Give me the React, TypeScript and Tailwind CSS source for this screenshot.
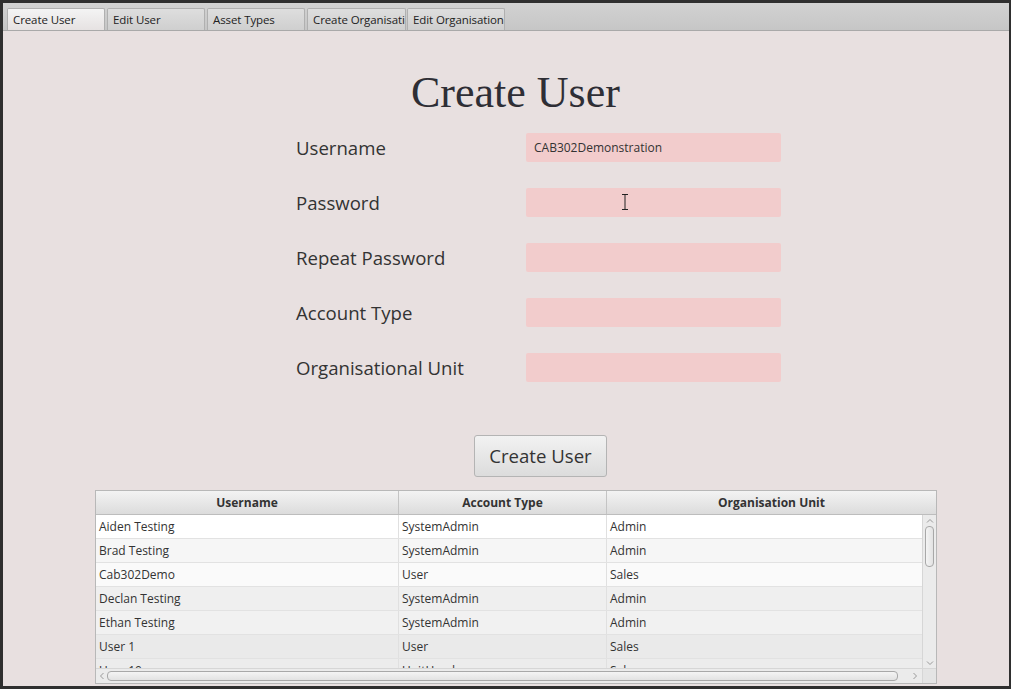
import React from 'react';

const tabs = [
  { label: 'Create User', cls: 'w-[98px]' },
  { label: 'Edit User', cls: 'w-[98px] ml-[2px]' },
  { label: 'Asset Types', cls: 'w-[98px] ml-[2px]' },
  { label: 'Create Organisation', cls: 'w-[99px] ml-[2px]' },
  { label: 'Edit Organisation', cls: 'w-[98px] ml-[1px]' },
];

const fields = ['Username', 'Password', 'Repeat Password', 'Account Type', 'Organisational Unit'];

const users = [
  { name: 'Aiden Testing', type: 'SystemAdmin', unit: 'Admin', bg: 'bg-[#ffffff]' },
  { name: 'Brad Testing', type: 'SystemAdmin', unit: 'Admin', bg: 'bg-[#f6f6f6]' },
  { name: 'Cab302Demo', type: 'User', unit: 'Sales', bg: 'bg-[#fafafa]' },
  { name: 'Declan Testing', type: 'SystemAdmin', unit: 'Admin', bg: 'bg-[#efefef]' },
  { name: 'Ethan Testing', type: 'SystemAdmin', unit: 'Admin', bg: 'bg-[#f1f1f1]' },
  { name: 'User 1', type: 'User', unit: 'Sales', bg: 'bg-[#eaeaea]' },
  { name: 'User 10', type: 'UnitHead', unit: 'Sales', bg: 'bg-[#ececec]' },
];

const TabBar = () => (
  <div className="flex h-[28px] items-end border-b border-[#a9a9a9] bg-gradient-to-b from-[#d2d2d2] to-[#c6c6c6] pl-[4px]">
    {tabs.map((t, i) => (
      <div
        key={t.label}
        className={`flex h-[22px] items-center overflow-hidden whitespace-nowrap rounded-t-[2px] border border-b-0 border-[#b0b0b0] pl-[5px] text-[11.5px] tracking-[-0.1px] text-[#222] ${t.cls} ${
          i === 0 ? 'bg-gradient-to-b from-[#f4f4f4] to-[#e6e2e2]' : 'bg-gradient-to-b from-[#dedede] to-[#cfcfcf]'
        }`}
      >
        {t.label}
      </div>
    ))}
  </div>
);

const UserTable = () => (
  <div className="ml-[92px] mt-[13px] w-[842px] border border-[#b8b8b8] bg-white text-[12px] text-[#333]">
    {/* header */}
    <div className="grid h-[24px] grid-cols-[303px_208px_1fr] border-b border-[#bdbdbd] bg-gradient-to-b from-[#f3f3f3] to-[#dcdcdc] font-bold">
      <div className="flex items-center justify-center border-r border-[#c4c4c4]">Username</div>
      <div className="flex items-center justify-center border-r border-[#c4c4c4]">Account Type</div>
      <div className="flex items-center justify-center">Organisation Unit</div>
    </div>
    {/* body */}
    <div className="flex h-[153px]">
      <div className="flex-1 overflow-hidden">
        {users.map((u) => (
          <div key={u.name} className={`grid h-[24px] shrink-0 grid-cols-[303px_208px_1fr] border-b border-[#e2e2e2] ${u.bg}`}>
            <div className="flex items-center border-r border-[#e0e0e0] pl-[3px]">{u.name}</div>
            <div className="flex items-center border-r border-[#e0e0e0] pl-[3px]">{u.type}</div>
            <div className="flex items-center pl-[3px]">{u.unit}</div>
          </div>
        ))}
      </div>
      {/* vertical scrollbar */}
      <div className="flex w-[14px] flex-col items-center border-l border-[#d6d6d6] bg-[#ebebeb]">
        <svg width="8" height="8" viewBox="0 0 8 8" className="mt-[2px]">
          <path d="M1 5.5 L4 2.5 L7 5.5" fill="none" stroke="#9a9a9a" strokeWidth="1" />
        </svg>
        <div className="mt-[1px] h-[41px] w-[9px] rounded-[4px] border border-[#a8a8a8] bg-gradient-to-r from-[#f4f4f4] to-[#e2e2e2]" />
        <div className="flex-1" />
        <svg width="8" height="8" viewBox="0 0 8 8" className="mb-[1px]">
          <path d="M1 2.5 L4 5.5 L7 2.5" fill="none" stroke="#9a9a9a" strokeWidth="1" />
        </svg>
      </div>
    </div>
    {/* horizontal scrollbar */}
    <div className="flex h-[15px] border-t border-[#d6d6d6] bg-[#ebebeb]">
      <div className="flex flex-1 items-center">
        <svg width="8" height="8" viewBox="0 0 8 8" className="ml-[2px]">
          <path d="M5.5 1 L2.5 4 L5.5 7" fill="none" stroke="#9a9a9a" strokeWidth="1" />
        </svg>
        <div className="ml-[1px] h-[10px] w-[791px] rounded-[4px] border border-[#a8a8a8] bg-gradient-to-b from-[#f4f4f4] to-[#e2e2e2]" />
        <div className="flex-1" />
        <svg width="8" height="8" viewBox="0 0 8 8" className="mr-[3px]">
          <path d="M2.5 1 L5.5 4 L2.5 7" fill="none" stroke="#9a9a9a" strokeWidth="1" />
        </svg>
      </div>
      <div className="w-[14px] border-l border-[#d6d6d6] bg-[#e4e4e4]" />
    </div>
  </div>
);

export default function App() {
  return (
    <div className="h-[689px] w-[1011px] overflow-hidden bg-[#2f2f2f] pb-[3px] pl-[3px] pr-[2px] pt-[3px] font-['Open_Sans',sans-serif]">
      <div className="flex h-full flex-col bg-[#e8e0e0]">
        <TabBar />
        <div className="flex flex-1 flex-col">
          <h1 className="ml-[408px] mt-[38px] font-['Liberation_Serif',serif] text-[44px] leading-[48px] text-[#2e2e35]">
            Create User
          </h1>
          <div className="ml-[293px] mt-[16px] flex flex-col gap-[26px]">
            {fields.map((f, i) => (
              <div key={f} className="flex h-[29px] items-center">
                <div className="w-[230px] text-[18.6px] text-[#333]">{f}</div>
                <div className="relative flex h-[29px] w-[255px] items-center rounded-[2px] bg-[#f2cccc] pl-[8px] text-[12px] text-[#333]">
                  {i === 0 ? 'CAB302Demonstration' : ''}
                  {i === 1 && (
                    <svg width="8" height="16" viewBox="0 0 8 16" className="absolute left-[95px] top-[6px]">
                      <path d="M1 0.5 H7 M4 0.5 V15.5 M1 15.5 H7" fill="none" stroke="#222" strokeWidth="1" />
                    </svg>
                  )}
                </div>
              </div>
            ))}
          </div>
          <button className="ml-[471px] mt-[53px] h-[42px] w-[133px] rounded-[3px] border border-[#b4b4b4] bg-gradient-to-b from-[#f2f2f2] to-[#dcdcdc] text-[18.6px] text-[#333]">
            Create User
          </button>
          <UserTable />
        </div>
      </div>
    </div>
  );
}
